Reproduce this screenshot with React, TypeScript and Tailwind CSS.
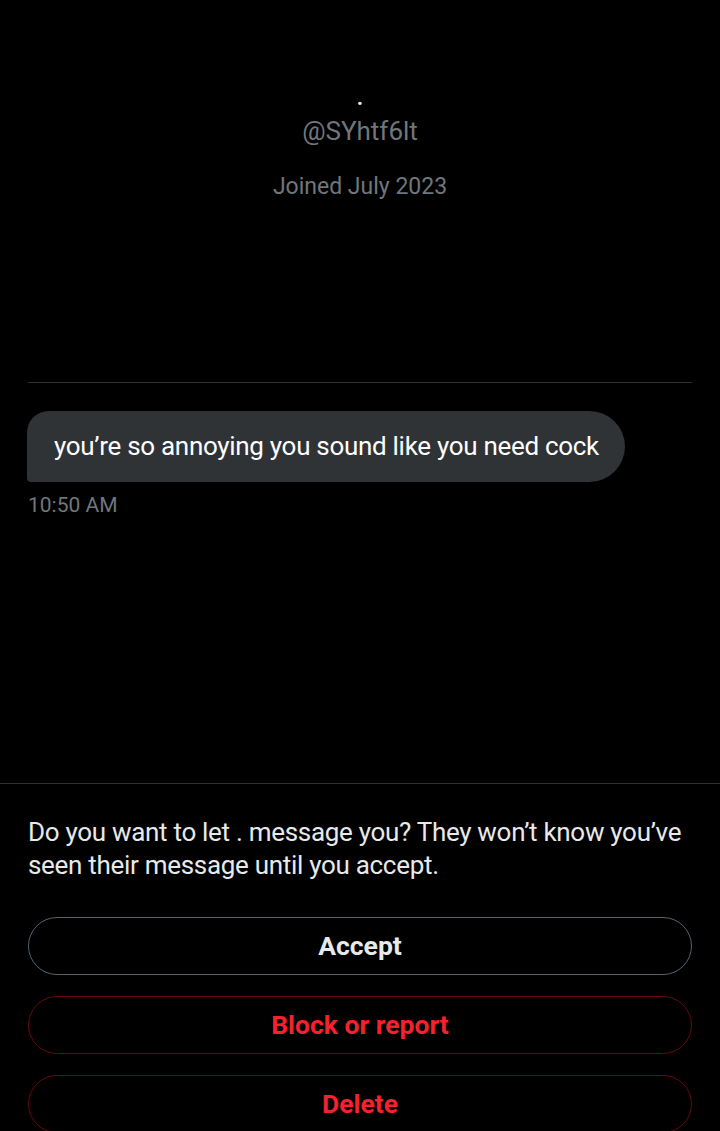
import React from 'react';

const font = { fontFamily: 'Roboto, "Noto Sans", sans-serif' };

function ActionButton({ label, tone }: { label: string; tone: 'neutral' | 'danger' }) {
  const cls = tone === 'neutral'
    ? 'border-[#536471] text-[#e7e9ea]'
    : 'border-[#67070f] text-[#f4212e]';
  return (
    <button className={`w-full h-[58px] rounded-full border bg-black text-[26.5px] font-bold ${cls}`}>
      {label}
    </button>
  );
}

export default function App() {
  return (
    <div className="w-[720px] h-[1131px] bg-black overflow-hidden flex flex-col" style={font}>
      {/* profile header */}
      <div className="flex flex-col items-center pt-[84px]">
        <span className="text-[22px] leading-[28px] font-bold text-[#e7e9ea]">.</span>
        <span className="mt-[4px] text-[26px] leading-[30px] text-[#71767b]">@SYhtf6lt</span>
        <span className="mt-[26px] text-[23px] leading-[30px] text-[#71767b]">Joined July 2023</span>
      </div>

      <div className="mx-[28px] mt-[180px] h-px bg-[#2f3336]" />

      {/* message */}
      <div className="px-[27px] pt-[28px]">
        <div className="inline-flex items-center h-[71px] pl-[27px] pr-[26px] bg-[#2f3336] rounded-l-[22px] rounded-bl-[4px] rounded-r-[36px]">
          <span className="text-[26px] text-white tracking-[-0.3px]">you’re so annoying you sound like you need cock</span>
        </div>
        <div className="mt-[9px] pl-px text-[21px] leading-[28px] text-[#71767b]">10:50 AM</div>
      </div>

      <div className="flex-1" />

      {/* request prompt */}
      <div className="border-t border-[#2f3336] px-[28px] pt-[32px] mb-[-2px]">
        <p className="text-[26px] leading-[33px] text-[#e7e9ea] tracking-[-0.3px]">
          Do you want to let . message you? They won’t know you’ve seen their message until you accept.
        </p>
        <div className="flex flex-col gap-[21px] mt-[35px] h-[216px] overflow-hidden">
          <ActionButton label="Accept" tone="neutral" />
          <ActionButton label="Block or report" tone="danger" />
          <ActionButton label="Delete" tone="danger" />
        </div>
      </div>
    </div>
  );
}
